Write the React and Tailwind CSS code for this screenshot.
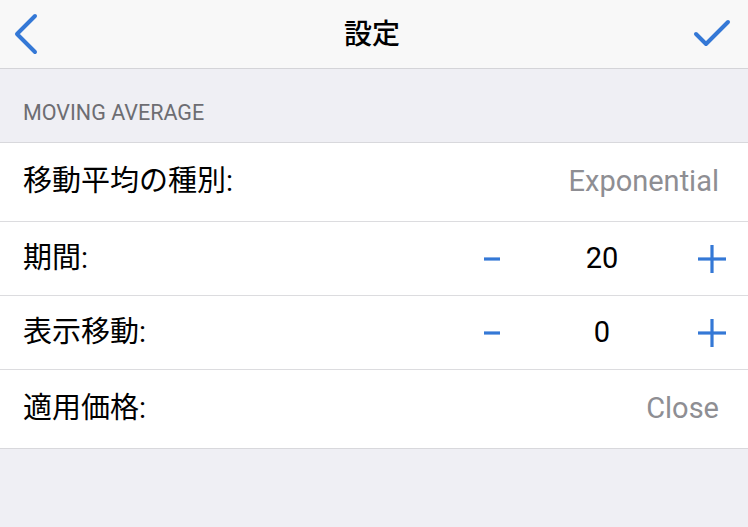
import React, { useState } from 'react';

const BLUE = 'text-[#3478d6]';

function Minus() {
  return (
    <svg width="18" height="6" viewBox="0 0 18 6" className={BLUE}>
      <line x1="1" y1="3" x2="17" y2="3" stroke="currentColor" strokeWidth="3.2" />
    </svg>
  );
}

function Plus() {
  return (
    <svg width="30" height="30" viewBox="0 0 30 30" className={BLUE}>
      <line x1="1" y1="15" x2="29" y2="15" stroke="currentColor" strokeWidth="3.2" />
      <line x1="15" y1="1" x2="15" y2="29" stroke="currentColor" strokeWidth="3.2" />
    </svg>
  );
}

function Stepper({ value, onChange }) {
  return (
    <div className="flex items-center">
      <button onClick={() => onChange(value - 1)} className="w-[40px] flex justify-center">
        <Minus />
      </button>
      <span className="w-[180px] text-center text-[29px] text-black">{value}</span>
      <button onClick={() => onChange(value + 1)} className="w-[40px] flex justify-center">
        <Plus />
      </button>
    </div>
  );
}

export default function App() {
  const [period, setPeriod] = useState(20);
  const [shift, setShift] = useState(0);

  return (
    <div className="w-[748px] h-[527px] bg-[#efeff4] font-['Roboto','Noto_Sans_CJK_JP',sans-serif] overflow-hidden">
      {/* nav bar */}
      <div className="h-[69px] bg-[#f8f8f8] border-b border-[#d4d4d8] grid grid-cols-[1fr_auto_1fr] items-center px-[12px]">
        <svg width="30" height="42" viewBox="0 0 30 42" className={BLUE}>
          <polyline points="23,3 5,21 23,39" fill="none" stroke="currentColor" strokeWidth="4" strokeLinecap="round" strokeLinejoin="round" />
        </svg>
        <span className="text-[28px] font-medium text-black pt-[2px] -ml-[4px]">設定</span>
        <svg width="40" height="34" viewBox="0 0 40 34" className={`${BLUE} justify-self-end mr-[4px]`}>
          <polyline points="4,17 14,27 36,5" fill="none" stroke="currentColor" strokeWidth="4" strokeLinecap="round" strokeLinejoin="round" />
        </svg>
      </div>

      {/* section header */}
      <div className="h-[74px] border-b border-[#d8d8dc] flex items-center pt-[16px] px-[23px]">
        <span className="text-[21.5px] text-[#6d6d72]">MOVING AVERAGE</span>
      </div>

      <div className="bg-white">
        <div className="h-[79px] border-b border-[#dcdcdf] flex items-center justify-between pl-[23px] pr-[29px]">
          <span className="text-[29px] text-black">移動平均の種別:</span>
          <span className="text-[29px] text-[#8e8e93]">Exponential</span>
        </div>
        <div className="h-[74px] border-b border-[#dcdcdf] flex items-center justify-between pl-[23px] pr-[16px]">
          <span className="text-[29px] text-black">期間:</span>
          <Stepper value={period} onChange={setPeriod} />
        </div>
        <div className="h-[74px] border-b border-[#dcdcdf] flex items-center justify-between pl-[23px] pr-[16px]">
          <span className="text-[29px] text-black">表示移動:</span>
          <Stepper value={shift} onChange={setShift} />
        </div>
        <div className="h-[79px] border-b border-[#d8d8dc] flex items-center justify-between pl-[23px] pr-[29px]">
          <span className="text-[29px] text-black">適用価格:</span>
          <span className="text-[29px] text-[#8e8e93]">Close</span>
        </div>
      </div>
    </div>
  );
}
